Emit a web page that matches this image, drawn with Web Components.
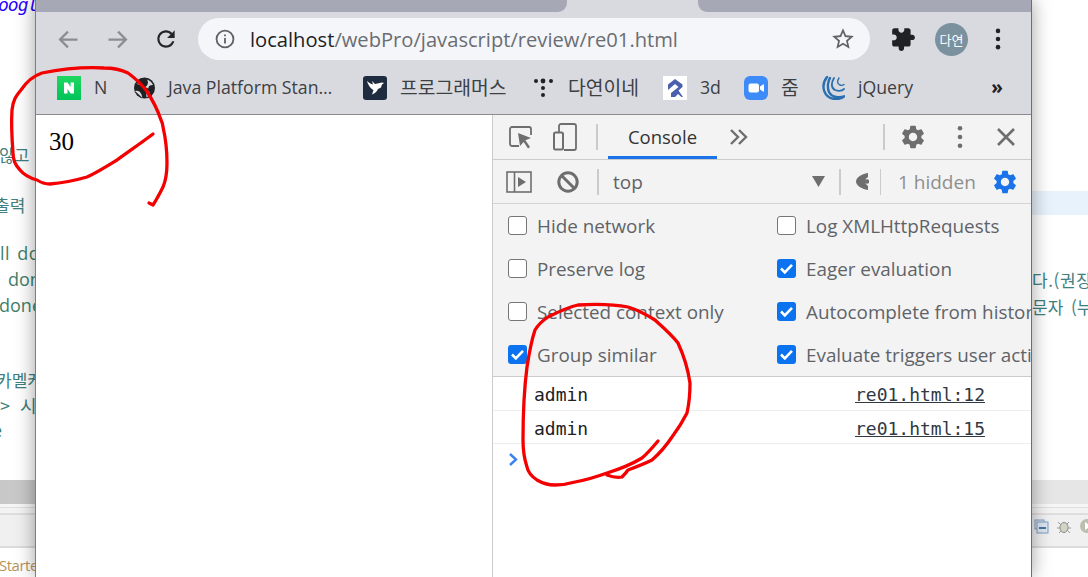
<!DOCTYPE html>
<html lang="ko"><head><meta charset="utf-8"><title>re01</title>
<style>html,body{margin:0;padding:0;background:#fff}shot-desk{font-family:"Open Sans","Noto Sans CJK KR",sans-serif}</style></head>
<body>
<shot-desk>
  <desk-backdrop slot="back"></desk-backdrop>
  <browser-window slot="win">
    <tab-strip></tab-strip>
    <browser-toolbar></browser-toolbar>
    <bookmark-bar>
      <bookmark-item label="N" w="12" kind="naver"></bookmark-item>
      <bookmark-item label="Java Platform Stan…" w="170" kind="globe"></bookmark-item>
      <bookmark-item label="프로그래머스" w="106" kind="prog" ko></bookmark-item>
      <bookmark-item label="다연이네" w="70" kind="dots" ko></bookmark-item>
      <bookmark-item label="3d" w="19" kind="r"></bookmark-item>
      <bookmark-item label="줌" w="15" kind="zoom" ko></bookmark-item>
      <bookmark-item label="jQuery" w="54" kind="jq"></bookmark-item>
    </bookmark-bar>
    <window-body>
      <page-pane slot="page">30</page-pane>
      <dev-tools slot="tools">
        <dev-main-bar></dev-main-bar>
        <dev-console-bar></dev-console-bar>
        <dev-settings>
          <dev-check label="Hide network"></dev-check>
          <dev-check label="Log XMLHttpRequests"></dev-check>
          <dev-check label="Preserve log"></dev-check>
          <dev-check label="Eager evaluation" checked></dev-check>
          <dev-check label="Selected context only"></dev-check>
          <dev-check label="Autocomplete from history" checked></dev-check>
          <dev-check label="Group similar" checked></dev-check>
          <dev-check label="Evaluate triggers user activation" checked></dev-check>
        </dev-settings>
        <console-row source="re01.html:12" style="--h:34px">admin</console-row>
        <console-row source="re01.html:15" style="--h:33px">admin</console-row>
        <console-prompt></console-prompt>
      </dev-tools>
    </window-body>
  </browser-window>
  <ink-marks slot="ink"></ink-marks>
</shot-desk>
<script>
const def=(name,html)=>customElements.define(name,class extends HTMLElement{
  connectedCallback(){ if(this.shadowRoot)return; const r=this.attachShadow({mode:'open'}); r.innerHTML=typeof html==='function'?html(this):html; }
});
const GEAR="M19.14 12.94c.04-.3.06-.61.06-.94 0-.32-.02-.64-.07-.94l2.03-1.58c.18-.14.23-.41.12-.61l-1.92-3.32c-.12-.22-.37-.29-.59-.22l-2.39.96c-.5-.38-1.03-.7-1.62-.94l-.36-2.54c-.04-.24-.24-.41-.48-.41h-3.84c-.24 0-.43.17-.47.41l-.36 2.54c-.59.24-1.13.57-1.62.94l-2.39-.96c-.22-.08-.47 0-.59.22L2.74 8.87c-.12.21-.08.47.12.61l2.03 1.58c-.05.3-.09.63-.09.94s.02.64.07.94l-2.03 1.58c-.18.14-.23.41-.12.61l1.92 3.32c.12.22.37.29.59.22l2.39-.96c.5.38 1.03.7 1.62.94l.36 2.54c.05.24.24.41.48.41h3.84c.24 0 .44-.17.47-.41l.36-2.54c.59-.24 1.13-.56 1.62-.94l2.39.96c.22.08.47 0 .59-.22l1.92-3.32c.12-.22.07-.47-.12-.61l-2.01-1.58zM12 15.6c-1.98 0-3.6-1.62-3.6-3.6s1.62-3.6 3.6-3.6 3.6 1.62 3.6 3.6-1.62 3.6-3.6 3.6z";

def('shot-desk',`<style>:host{display:block;position:relative;width:1088px;height:577px;overflow:hidden;background:#fff}
::slotted([slot=back]){position:absolute;inset:0}
::slotted([slot=win]){position:absolute;left:35px;top:0;width:997px;height:577px}
::slotted([slot=ink]){position:absolute;inset:0;pointer-events:none}</style>
<slot name="back"></slot><slot name="win"></slot><slot name="ink"></slot>`);

def('desk-backdrop',`<style>:host{display:block;font-family:"Noto Sans CJK KR",sans-serif;color:#3f7f7f;overflow:hidden}
.t{position:absolute;white-space:nowrap;line-height:20px;font-size:17px}
.m{font-family:"Open Sans",sans-serif;font-size:18px;color:#3f7f6a}
.b{position:absolute;left:0;right:0}
svg{position:absolute}</style>
<span class="t" style="left:-2px;top:-5px;color:#2a00ff;font:italic 18px/20px 'DejaVu Sans Mono',monospace;letter-spacing:-1px">oogl</span>
<span class="t" style="left:-1px;top:145px;font-size:16.500px">않고</span>
<span class="t" style="left:-6px;top:195px">출력</span>
<span class="t m" style="left:0;top:243px;word-spacing:2px;letter-spacing:.5px">ll do</span>
<span class="t m" style="left:8px;top:269px">don</span>
<span class="t m" style="left:-1px;top:295px">done</span>
<span class="t" style="left:-4px;top:370px">카멜케</span>
<span class="t" style="left:0;top:395px;word-spacing:5px;font-size:18px">&gt; 시</span>
<span class="t m" style="left:-8px;top:420px">e</span>
<div class="b" style="top:191px;height:24px;left:1032px;background:#e8f2fc"></div>
<span class="t" style="left:1032px;top:270px;letter-spacing:.6px">다.(권장</span>
<span class="t" style="left:1032px;top:297px;word-spacing:3px">문자 (누</span>
<div class="b" style="top:480px;height:24px;background:#e6e6e6"></div>
<div class="b" style="top:480px;height:24px;right:auto;width:36px;background:#c8c8c8"></div>
<div class="b" style="top:504px;height:3px;background:#f6f6f6;border-bottom:1px solid #dedede;box-sizing:content-box"></div>
<div class="b" style="top:508px;height:5px;background:#f3f3f3;border-bottom:2px solid #dedede;box-sizing:content-box"></div>
<div class="b" style="top:515px;height:31px;background:#f0f0f0;border-bottom:2px solid #dcdcdc"></div>
<span class="t" style="left:-1px;top:555px;font-size:15px;letter-spacing:-.5px;font-family:'Open Sans',sans-serif;color:#b8935a">Starte</span>
<svg style="left:1034px;top:519px" width="16" height="16" viewBox="0 0 16 16"><rect x="1" y="1" width="9" height="9" fill="#dbe6f2" stroke="#7f9cc0"/><rect x="3" y="3" width="11" height="11" fill="#dbe6f2" stroke="#7f9cc0"/><path d="M5 9h7" stroke="#1d4c84" stroke-width="1.5"/></svg>
<svg style="left:1056px;top:519px" width="16" height="16" viewBox="0 0 16 16"><ellipse cx="8" cy="8.500" rx="4" ry="5" fill="#d4d4c4" stroke="#888"/><path d="M2 3l3 3M14 14l-3-3M1 9h3M12 9h3M3 14l2-2M13 3l-2 2" stroke="#999" fill="none"/></svg>
<svg style="left:1079px;top:518px" width="16" height="16" viewBox="0 0 16 16"><circle cx="8" cy="8" r="7" fill="#bdbdb0"/><path d="M6 4l6 4-6 4z" fill="#fff"/></svg>`);

def('browser-window',`<style>:host{display:flex;flex-direction:column;box-sizing:border-box;background:#d9dae0;
border-left:1px solid #7e7e7e;border-right:1px solid #6e6e6e;box-shadow:0 0 18px rgba(0,0,0,.38)}</style><slot></slot>`);

def('tab-strip',`<style>:host{display:flex;height:12px;background:#d9dae0;flex:none}
.a{width:531px;background:#a6a9b5;border-bottom-right-radius:9px}
.g{width:131px}.c{flex:1;background:#a6a9b5;border-bottom-left-radius:9px}</style>
<div class="a"></div><div class="g"></div><div class="c"></div>`);

def('browser-toolbar',`<style>:host{display:flex;align-items:center;height:54px;flex:none;padding:0 0 0 19px;box-sizing:border-box}
svg{display:block;flex:none}
.pill{width:672px;height:42px;border-radius:21px;background:#f5f6f9;display:flex;align-items:center;padding-left:16px;box-sizing:border-box;flex:none}
.url{font-size:20.150px;color:#6a6d73;margin-left:14px;white-space:nowrap;flex:1}.url b{font-weight:400;color:#202124}
.star{margin-right:14px}
.av{width:33px;height:33px;border-radius:50%;background:#7b929e;color:#fff;font:13px "Noto Sans CJK KR",sans-serif;display:flex;align-items:center;justify-content:center;flex:none}</style>
<svg width="27" height="27" viewBox="0 0 24 24"><path d="M20 12H5M11.500 5L4.500 12l7 7" fill="none" stroke="#8b8d92" stroke-width="2"/></svg>
<svg style="margin-left:22px" width="27" height="27" viewBox="0 0 24 24"><path d="M4 12h15M12.500 5l7 7-7 7" fill="none" stroke="#8b8d92" stroke-width="2"/></svg>
<svg style="margin-left:22px" width="26" height="26" viewBox="0 0 24 24"><path fill="#232427" d="M17.650 6.350C16.200 4.900 14.210 4 12 4c-4.420 0-7.990 3.580-7.990 8s3.570 8 7.990 8c3.730 0 6.840-2.550 7.730-6h-2.080c-.82 2.330-3.040 4-5.650 4-3.310 0-6-2.690-6-6s2.690-6 6-6c1.660 0 3.140.69 4.220 1.780L13 11h7V4l-2.350 2.350z"/></svg>
<div class="pill" style="margin-left:19px">
<svg width="22" height="22" viewBox="0 0 24 24"><circle cx="12" cy="12" r="9.200" fill="none" stroke="#5f6368" stroke-width="2"/><path d="M12 10.800v6M12 7v2" stroke="#5f6368" stroke-width="2" fill="none"/></svg>
<span class="url"><b>localhost</b>/webPro/javascript/review/re01.html</span>
<svg class="star" width="26" height="26" viewBox="0 0 24 24"><path fill="#5f6368" d="M22 9.240l-7.190-.62L12 2 9.190 8.630 2 9.240l5.460 4.730L5.820 21 12 17.270 18.180 21l-1.630-7.030L22 9.240zM12 15.400l-3.760 2.270 1-4.280-3.320-2.880 4.380-.38L12 6.100l1.710 4.040 4.380.38-3.320 2.880 1 4.280L12 15.400z"/></svg></div>
<svg style="margin-left:20px" width="26" height="26" viewBox="0 0 24 24"><path fill="#202124" d="M20.500 11H19V7c0-1.100-.9-2-2-2h-4V3.500C13 2.120 11.880 1 10.500 1S8 2.120 8 3.500V5H4c-1.100 0-1.990.9-1.990 2v3.800H3.500c1.490 0 2.700 1.210 2.700 2.700s-1.210 2.700-2.700 2.700H2V20c0 1.100.9 2 2 2h3.800v-1.500c0-1.490 1.210-2.700 2.700-2.700 1.490 0 2.700 1.210 2.700 2.700V22H17c1.100 0 2-.9 2-2v-4h1.500c1.380 0 2.500-1.120 2.500-2.500S21.880 11 20.500 11z" transform="rotate(90 12 12)"/></svg>
<div class="av" style="margin-left:19px">다연</div>
<svg style="margin-left:17px" width="26" height="26" viewBox="0 0 24 24"><circle cx="12" cy="4.500" r="2.100" fill="#202124"/><circle cx="12" cy="12" r="2.100" fill="#202124"/><circle cx="12" cy="19.500" r="2.100" fill="#202124"/></svg>`);

def('bookmark-bar',`<style>:host{display:flex;align-items:center;height:49px;flex:none;padding:0 0 5px 21px;box-sizing:border-box;border-bottom:1px solid #8b8b8f}
.more{margin-left:auto;margin-right:28px;font:bold 19px/20px "Open Sans",sans-serif;color:#202124;padding-bottom:2px}</style>
<slot></slot><span class="more">»</span>`);

const ICONS={
naver:`<defs><linearGradient id="g" x1="0" y1="0" x2="0" y2="1"><stop offset="0" stop-color="#1ed760"/><stop offset="1" stop-color="#00c35a"/></linearGradient></defs><rect width="24" height="24" fill="url(#g)"/><path d="M7 6.500h3.600l3 4.600V6.500H17v11h-3.500l-3-4.600v4.600H7z" fill="#fff"/>`,
globe:`<circle cx="13.500" cy="12" r="10.500" fill="#202124"/><path d="M5 7.500c3 .3 5 .8 6 2.500s3 1.500 4.500 0 2-4 .5-6.500c3 1 5 3 6 5.500-3.500 0-5 1.500-4.500 3.500M4 15c3-1 5 .5 6 2.500s1 3 1.500 4.500M15 14c2 0 3.500 1 3.500 3s-1 3-3 4.500" fill="#d9dae0"/>`,
prog:`<rect width="24" height="24" rx="3" fill="#1f2c40"/><path d="M4 5c2 2 4 3 6 3.500L9 5l3 3 7-1.500 2 .5-2 1.500-1 3-3 1.500c-1 2.500-3 4.500-6 5.500l1.500-4.500C8 13 5 9 4 5z" fill="#fff"/>`,
dots:`<g fill="#202124"><circle cx="5" cy="5" r="2"/><circle cx="12" cy="5" r="2.400"/><circle cx="20" cy="5" r="2"/><circle cx="12" cy="12" r="2"/><circle cx="12" cy="19" r="2"/></g>`,
r:`<rect width="24" height="24" fill="#fff"/><path d="M12 3L5 8.500v5.500l7-6 3.500 3L8 17v4h4l3-3 3.500 3H20l-4.500-6.500 4-3.500V8.500z" fill="#4a5fae"/>`,
zoom:`<rect width="24" height="24" rx="6" fill="#3d8bf8"/><rect x="4.500" y="7.500" width="10.500" height="9" rx="2" fill="#fff"/><path d="M16 10.500l4-2.500v8l-4-2.500z" fill="#fff"/>`,
jq:`<g fill="none" stroke="#2a6fb0" stroke-linecap="round"><path d="M6 1C-1 10 3 23 15 23c4 0 7-1 9-3-5 2-13 2-16-4C6 11 7 5 9 2" stroke-width="2.400"/><path d="M13 2c-3 5-3 10 1 12 3 1 7 1 9-1" stroke-width="1.800"/><path d="M18 2c-2 3-2 6 1 7 1 .4 3 .3 4-.5" stroke-width="1.400"/></g>`};
def('bookmark-item',el=>`<style>:host{display:flex;align-items:center;flex:none;margin-right:25px}
svg{display:block;flex:none;margin-right:13px}
span{font-size:${el.hasAttribute('ko')?'19.300px':'17.700px'};color:#3c4043;white-space:nowrap;display:block;padding-bottom:2px;width:${el.getAttribute('w')}px}</style>
<svg width="24" height="24" viewBox="0 0 24 24">${ICONS[el.getAttribute('kind')]}</svg><span>${el.getAttribute('label')}</span>`);

def('window-body',`<style>:host{display:flex;flex:1;min-height:0;background:#fff}
::slotted([slot=page]){width:456px;flex:none}::slotted([slot=tools]){flex:1;min-width:0}</style>
<slot name="page"></slot><slot name="tools"></slot>`);

def('page-pane',`<style>:host{display:block;background:#fff;font:25px/28px "Liberation Serif",serif;color:#000;padding:13px 0 0 13px;box-sizing:border-box}</style><slot></slot>`);

def('dev-tools',`<style>:host{display:flex;flex-direction:column;border-left:1px solid #cbcbcb;background:#fff;overflow:hidden;box-sizing:border-box}</style><slot></slot>`);

def('dev-main-bar',`<style>:host{display:flex;align-items:center;height:45px;flex:none;background:#f3f3f3;border-bottom:1px solid #cbcbcb;box-sizing:border-box;padding-left:15px}
svg{display:block;flex:none}.d{width:2px;height:26px;background:#cbcbcb;flex:none}
.tab{font-size:18.500px;color:#333;height:44px;line-height:43px;box-sizing:border-box;border-bottom:3px solid #1a73e8;width:109px;text-align:center;margin-left:10px;flex:none}
.more{margin-left:12px}</style>
<svg width="26" height="26" viewBox="0 0 26 26"><path d="M11 22H4a2 2 0 0 1-2-2V5a2 2 0 0 1 2-2h17a2 2 0 0 1 2 2v6" fill="none" stroke="#6e6e6e" stroke-width="1.800"/><path d="M10 9l13 5-5.600 2.200L22 23l-2 1.500-4.300-6.600L12 22z" fill="#6e6e6e"/></svg>
<svg style="margin-left:18px" width="26" height="28" viewBox="0 0 26 28"><path d="M7 9V3a2 2 0 0 1 2-2h13a2 2 0 0 1 2 2v22a2 2 0 0 1-2 2H12" fill="none" stroke="#6e6e6e" stroke-width="1.800"/><rect x="2" y="9.500" width="9" height="17" rx="1.500" fill="none" stroke="#6e6e6e" stroke-width="2"/></svg>
<div class="d" style="margin-left:18px"></div><div class="tab">Console</div>
<svg class="more" width="20" height="18" viewBox="0 0 20 18"><path d="M2 2l7 7-7 7M10 2l7 7-7 7" fill="none" stroke="#6e6e6e" stroke-width="2.400"/></svg>
<div class="d" style="margin-left:134px"></div>
<svg style="margin-left:14px" width="28" height="28" viewBox="0 0 24 24"><path fill="#6e6e6e" d="${GEAR}"/></svg>
<svg style="margin-left:19px" width="28" height="28" viewBox="0 0 24 24"><circle cx="12" cy="4.500" r="2" fill="#6e6e6e"/><circle cx="12" cy="12" r="2" fill="#6e6e6e"/><circle cx="12" cy="19.500" r="2" fill="#6e6e6e"/></svg>
<svg style="margin-left:21px" width="22" height="22" viewBox="0 0 22 22"><path d="M3 3l16 16M19 3L3 19" stroke="#6e6e6e" stroke-width="2.600" fill="none"/></svg>`);

def('dev-console-bar',`<style>:host{display:flex;align-items:center;height:44px;flex:none;background:#f3f3f3;border-bottom:1px solid #d4d4d4;box-sizing:border-box;padding-left:13px}
svg{display:block;flex:none}.d{width:2px;height:26px;background:#cbcbcb;flex:none}
.top{font-size:19px;color:#5f6368;margin-left:14px;width:199px;flex:none}
.hid{font-size:19px;color:#8e8e8e;margin-left:17px;flex:none;width:76px;white-space:nowrap}</style>
<svg width="26" height="22" viewBox="0 0 26 22"><rect x="1" y="1" width="24" height="20" fill="none" stroke="#6e6e6e" stroke-width="1.600"/><path d="M8.500 1v20" stroke="#6e6e6e" stroke-width="1.600"/><path d="M12 6l8 5-8 5z" fill="#6e6e6e"/></svg>
<svg style="margin-left:24px" width="24" height="24" viewBox="0 0 24 24"><circle cx="12" cy="12" r="9.200" fill="none" stroke="#6e6e6e" stroke-width="3"/><path d="M5.500 5.500l13 13" stroke="#6e6e6e" stroke-width="3"/></svg>
<div class="d" style="margin-left:17px"></div><span class="top">top</span>
<svg width="13" height="11" viewBox="0 0 13 11"><path d="M0 0h13L6.500 11z" fill="#6e6e6e"/></svg>
<div class="d" style="margin-left:14px"></div>
<svg style="margin-left:15px" width="13" height="17" viewBox="0 0 13 17"><path d="M12 0C5 1 0 5 0 8.500S5 16 12 17v-4a5 5 0 0 1 0-9z" fill="#6e6e6e"/><circle cx="11" cy="8.500" r="2.200" fill="#6e6e6e"/></svg>
<div class="d" style="margin-left:11px;width:1px"></div><span class="hid">1 hidden</span>
<svg style="margin-left:17px" width="28" height="28" viewBox="0 0 24 24"><path fill="#1a73e8" d="${GEAR}"/></svg>`);

def('dev-settings',`<style>:host{display:grid;grid-template-columns:269px 269px;grid-auto-rows:43px;height:173px;flex:none;background:#f3f3f3;border-bottom:1px solid #cbcbcb;box-sizing:border-box;padding:0 0 0 15px;overflow:hidden}</style><slot></slot>`);

def('dev-check',el=>{const c=el.hasAttribute('checked');return `<style>:host{display:flex;align-items:center;white-space:nowrap;min-width:0}
.b{width:19px;height:19px;box-sizing:border-box;border-radius:3px;flex:none;margin-right:10px;${c?'background:#0b72f0':'background:#fff;border:1.400px solid #767676'}}
svg{display:block}span{font-size:18.850px;color:#5f6368}</style>
<div class="b">${c?'<svg width="19" height="19" viewBox="0 0 19 19"><path d="M4 9.500l3.800 3.800L15 5.800" fill="none" stroke="#fff" stroke-width="2.600"/></svg>':''}</div><span>${el.getAttribute('label')}</span>`});

def('console-row',el=>`<style>:host{display:flex;align-items:center;height:var(--h,33px);flex:none;box-sizing:border-box;border-bottom:1px solid #ededed;padding:2px 0 0 41px;font:18px "DejaVu Sans Mono",monospace;color:#202124}
.m{flex:1}.s{text-decoration:underline;color:#303942;margin-right:46px}</style>
<span class="m"><slot></slot></span><span class="s">${el.getAttribute('source')}</span>`);

def('console-prompt',`<style>:host{display:block;padding:9px 0 0 15px}svg{display:block}</style>
<svg width="11" height="13" viewBox="0 0 11 13"><path d="M2 1l6 5.500-6 5.500" fill="none" stroke="#3b82f0" stroke-width="2.400"/></svg>`);

def('ink-marks',`<style>:host{display:block}svg{display:block}</style>
<svg width="1088" height="577" viewBox="0 0 1088 577"><g fill="none" stroke="#f50000" stroke-width="3.300" stroke-linecap="round" stroke-linejoin="round">
<path d="M153 134C141 143 128 152 117 160C104 168 96 173 87 177C73 181 62 183 50 184C44 184 40 182 37 180C30 178 24 175 20 170C15 165 13 160 13 153C12 140 11 125 12 110C13 100 16 96 21 90C27 81 33 76 42 73C62 69 85 67 104 68C115 68 122 70 128 73C135 78 141 84 146 90C152 99 157 108 161 120C163 124 163 126 163 127C166 140 167 152 167 163C167 172 166 180 163 187C160 193 157 199 153 205L149 203"/>
<path d="M658 441C653 447 648 453 642 458C632 464 620 469 607 473C596 477 586 480 575 482C568 484 562 485 555 485C548 485 542 483 537 480C531 476 528 472 527 467C524 458 523 449 523 440C523 415 524 390 527 367C529 354 531 342 535 330C538 325 542 321 548 317C558 312 568 307 578 305C595 304 612 304 628 307C638 310 647 315 655 320C664 328 672 335 678 343C684 356 688 369 690 383C690 394 689 404 687 413C683 421 678 429 672 437C666 446 660 453 652 460C644 464 636 467 628 470C626 473 624 475 622 477C617 478 612 477 607 475"/>
</g></svg>`);
</script>
</body></html>
